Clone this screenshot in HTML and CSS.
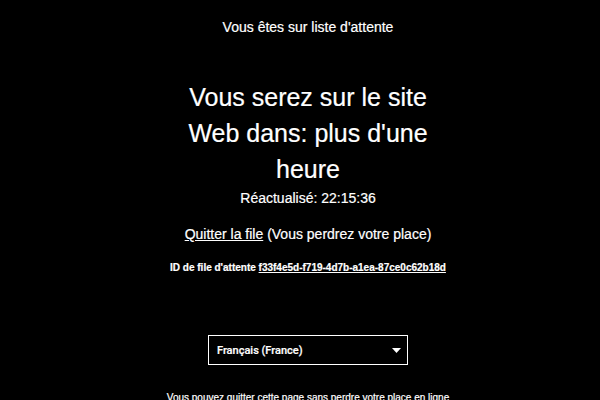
FILE: index.html
```html
<!DOCTYPE html>
<html lang="fr">
<head>
<meta charset="utf-8">
<link rel="stylesheet" href="styles.css">
</head>
<body>
<main class="page">
  <p class="title">Vous êtes sur liste d'attente</p>
  <h1 class="eta">Vous serez sur le site Web dans: plus d'une heure</h1>
  <p class="updated">Réactualisé: 22:15:36</p>
  <p class="leave"><a href="#" class="link">Quitter la file</a> (Vous perdrez votre place)</p>
  <p class="qid">ID de file d'attente <a href="#" class="link">f33f4e5d-f719-4d7b-a1ea-87ce0c62b18d</a></p>
  <div class="lang">
    <span class="lang-text">Français (France)</span>
    <svg class="caret" width="9" height="5" viewBox="0 0 9 5"><path d="M0 0H9L4.5 5Z" fill="#fff"/></svg>
  </div>
  <p class="foot">Vous pouvez quitter cette page sans perdre votre place en ligne</p>
</main>
</body>
</html>
```
FILE: styles.css
```css
html, body {
  margin: 0;
  padding: 0;
  background: #000;
  color: #fff;
  font-family: "Liberation Sans", Arial, sans-serif;
}
.page {
  display: flex;
  flex-direction: column;
  align-items: center;
  text-align: center;
  height: 400px;
  padding-left: 16px;
  overflow: hidden;
  -webkit-text-stroke: 0.2px #fff;
}
.page > * { flex-shrink: 0; }
p { margin: 0; }
.title {
  font-size: 14px;
  line-height: 16px;
  margin-top: 19px;
}
.eta {
  font-size: 25px;
  font-weight: normal;
  line-height: 36px;
  max-width: 270px;
  margin: 44px 0 0;
}
.updated {
  font-size: 14px;
  line-height: 16px;
  margin-top: 3px;
}
.leave {
  font-size: 14px;
  line-height: 18px;
  margin-top: 19px;
}
.link {
  color: #fff;
  text-decoration: underline;
}
.qid {
  font-size: 10px;
  font-weight: bold;
  line-height: 12px;
  margin-top: 19px;
}
.lang {
  box-sizing: border-box;
  width: 200px;
  height: 30px;
  margin-top: 61px;
  border: 1px solid #fff;
  display: flex;
  align-items: center;
  justify-content: space-between;
  padding: 0 6px 0 8px;
}
.lang-text {
  font-family: Roboto, "Liberation Sans", sans-serif;
  font-size: 11px;
  font-weight: 500;
}
.caret { display: block; }
.foot {
  font-size: 10px;
  line-height: 12px;
  margin-top: 27px;
}
```
